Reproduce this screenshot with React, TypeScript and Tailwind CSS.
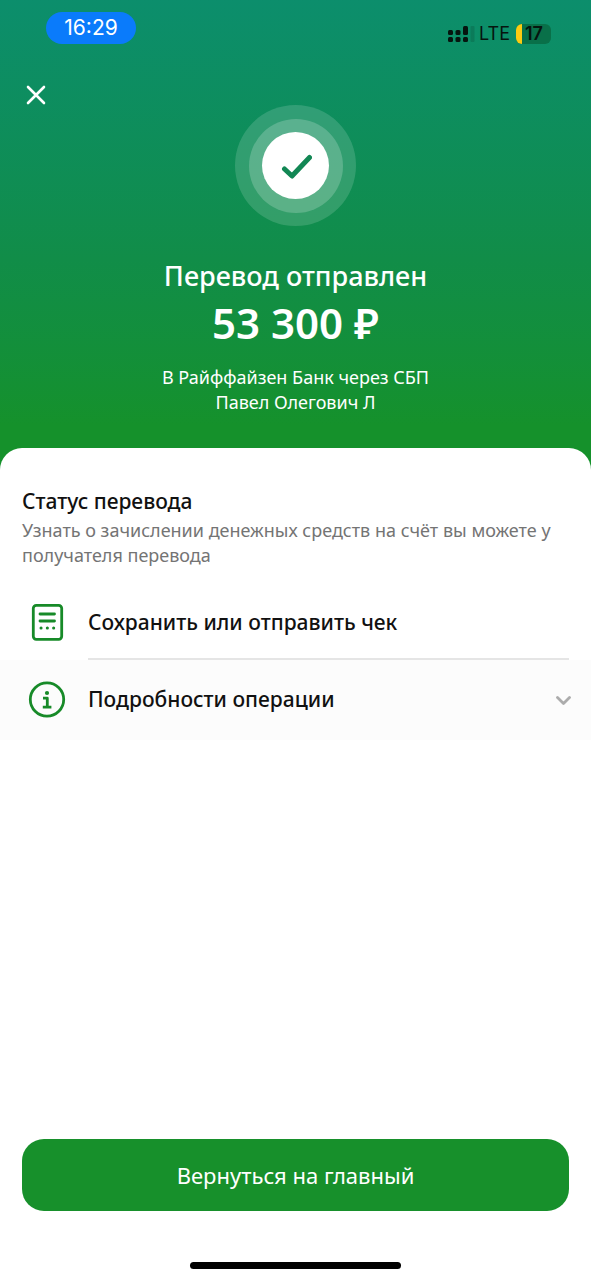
const CloseIcon = () => (
  <svg className="size-5" viewBox="0 0 20 20" fill="none" stroke="currentColor" strokeWidth="2.6" strokeLinecap="round">
    <path d="M2 2l16 16M18 2L2 18" />
  </svg>
)

const SignalIcon = () => (
  <svg className="h-5 w-7" viewBox="0 0 28 20" fill="#06150f">
    <rect x="1" y="6" width="5" height="5" rx="1.5" />
    <rect x="1" y="13" width="5" height="5" rx="1.5" />
    <rect x="8.500" y="6" width="5" height="5" rx="1.5" />
    <rect x="8.500" y="13" width="5" height="5" rx="1.5" />
    <rect x="16" y="2" width="5" height="9" rx="1.5" />
    <rect x="16" y="13" width="5" height="5" rx="1.5" />
    <rect x="23.500" y="2" width="4" height="16" rx="1" opacity="0.15" />
  </svg>
)

const CheckIcon = () => (
  <svg className="h-7 w-8" viewBox="0 0 32 28" fill="none" stroke="#128754" strokeWidth="5" strokeLinecap="round" strokeLinejoin="round">
    <path d="M4.500 17l7.500 7L29.500 5.500" />
  </svg>
)

const ReceiptIcon = () => (
  <svg className="h-10 w-10" viewBox="0 0 40 40" fill="none" stroke="#178a28" strokeWidth="2.8" strokeLinecap="round">
    <rect x="7.300" y="3.300" width="28.400" height="34" rx="3" />
    <path d="M14 12h14.500M14 19h14.500" />
    <path d="M15 26h.1M21.300 26h.1M27.600 26h.1" strokeWidth="3" />
  </svg>
)

const InfoIcon = () => (
  <svg className="h-10 w-10" viewBox="0 0 40 40" fill="none" stroke="#178a28" strokeWidth="2.8">
    <circle cx="21" cy="19.500" r="16.700" />
    <circle cx="21" cy="13" r="2.100" fill="#178a28" stroke="none" />
    <path d="M17 18.200h4.300v9M16.800 27.200h8.600" strokeLinejoin="round" />
  </svg>
)

const ChevronIcon = () => (
  <svg className="h-4 w-4" viewBox="0 0 16 16" fill="none" stroke="#acacac" strokeWidth="2.800" strokeLinecap="round" strokeLinejoin="round">
    <path d="M2.500 5.500L8.500 11.500l6-6" />
  </svg>
)

const StatusBar = () => {
  return (
    <div className="flex h-8 items-center justify-between pr-10 pl-[46px]">
      <span className="flex h-8 w-[90px] items-center justify-center rounded-full bg-[#0a7bfb] font-['Inter',sans-serif] text-[21px]">16:29</span>
      <div className="flex items-center gap-1 pt-3 text-[#06150f]">
        <SignalIcon />
        <span className="font-['Inter',sans-serif] text-[18px] leading-5">LTE</span>
        <span className="ml-[2px] flex h-5 w-[35px] items-center overflow-hidden rounded-md bg-[#097049]">
          <span className="h-5 w-[6px] bg-[#fccb12]" />
          <span className="pl-[3px] font-['Inter',sans-serif] text-[18px] leading-5 font-semibold">17</span>
        </span>
      </div>
    </div>
  )
}

const Header = () => {
  return (
    <header className="bg-linear-to-b from-[#0c8e6c] via-[#118d48] via-55% to-[#15912b] to-90% pt-3 pb-14 text-white">
      <StatusBar />
      <div className="flex h-[61px] items-end pl-[26px]">
        <button type="button" aria-label="Закрыть"><CloseIcon /></button>
      </div>
      <div className="mx-auto flex size-[121px] items-center justify-center rounded-full bg-white/15">
        <div className="flex size-[94px] items-center justify-center rounded-full bg-white/20">
          <div className="flex size-[67px] items-center justify-center rounded-full bg-white">
            <CheckIcon />
          </div>
        </div>
      </div>
      <div className="pt-[30px] text-center">
        <h1 className="text-[27px] leading-10 font-medium">Перевод отправлен</h1>
        <p className="text-[42px] leading-[54px] font-semibold">53 300 ₽</p>
        <p className="pt-[15px] pb-px text-[18px] leading-[25px]">
          В Райффайзен Банк через СБП
          <br />
          Павел Олегович Л
        </p>
      </div>
    </header>
  )
}

export default function App() {
  return (
    <div className="flex min-h-screen flex-col bg-white font-['Noto_Sans',sans-serif]">
      <Header />
      <main className="-mt-6 flex flex-1 flex-col rounded-t-[22px] bg-white">
        <section className="px-[22px] pt-9">
          <h2 className="text-[21px] leading-[34px] font-medium text-[#111]">Статус перевода</h2>
          <p className="text-[18px] leading-[25px] text-[#747474]">
            Узнать о зачислении денежных средств на счёт вы можете у получателя перевода
          </p>
        </section>
        <div className="pt-4 text-[21px] font-medium text-[#111]">
          <button type="button" className="flex w-full items-center pr-[22px] pl-[26px] text-left">
            <ReceiptIcon />
            <span className="ml-[22px] flex h-[76px] flex-1 items-center border-b-2 border-[#e5e5e5] pt-1">Сохранить или отправить чек</span>
          </button>
          <button type="button" className="flex h-20 w-full items-center bg-[#fcfcfc] pr-5 pl-[26px] text-left">
            <InfoIcon />
            <span className="ml-[22px] flex-1">Подробности операции</span>
            <ChevronIcon />
          </button>
        </div>
      </main>
      <footer className="px-[22px] pb-[11px]">
        <button type="button" className="h-[72px] w-full rounded-[22px] bg-[#17902b] text-[22px] text-white">Вернуться на главный</button>
        <div className="mx-auto mt-[51px] h-[7px] w-[211px] rounded-full bg-black" />
      </footer>
    </div>
  )
}
